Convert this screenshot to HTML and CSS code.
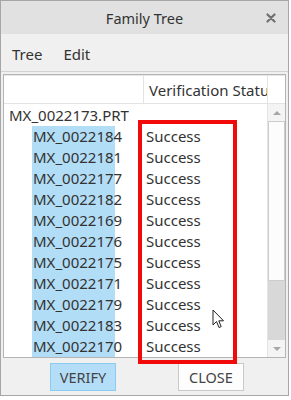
FILE: index.html
```html
<!DOCTYPE html>
<html lang="en">
<head>
<meta charset="UTF-8" />
<meta name="viewport" content="width=device-width, initial-scale=1" />
<title>Family Tree</title>
<link rel="stylesheet" href="styles.css">
</head>
<body>

<div class="window">
  <div class="titlebar">
    <span></span>
    <span class="title">Family Tree</span>
    <svg class="close" width="10" height="10" viewBox="0 0 10 10">
      <path d="M1.5 1.5 L8.5 8.5 M8.5 1.5 L1.5 8.5" stroke="#6f6f6f" stroke-width="2.2" stroke-linecap="round"/>
    </svg>
  </div>

  <div class="menubar">
    <span class="menu-item">Tree</span>
    <span class="menu-item">Edit</span>
  </div>

  <div class="panel">
    <div class="list">
      <div class="list-header">
        <div class="col-name"></div>
        <div class="col-status">Verification Status</div>
      </div>
      <div class="list-body" id="listBody">
        <div class="row">
          <div class="col-name root">MX_0022173.PRT</div>
          <div class="col-status"></div>
        </div>
        <!-- child rows injected by JS -->
      </div>
    </div>
    <div class="scrollbar">
      <div class="scroll-corner"></div>
      <div class="scroll-btn"><span class="arrow up"></span></div>
      <div class="scroll-thumb"></div>
      <div class="scroll-track"></div>
      <div class="scroll-btn"><span class="arrow down"></span></div>
    </div>
  </div>

  <div class="buttons">
    <button class="btn primary">VERIFY</button>
    <button class="btn">CLOSE</button>
  </div>

  <!-- annotation overlay -->
  <div class="highlight-box"></div>
  <svg class="cursor" width="13" height="21" viewBox="0 0 13 21">
    <path d="M1 1 L1 16 L4.5 12.5 L7 18.5 L9.2 17.6 L6.8 11.8 L11.5 11.8 Z" fill="#fff" stroke="#222" stroke-width="1" stroke-linejoin="round"/>
  </svg>
</div>

<script>
  const parts = ['0022184', '0022181', '0022177', '0022182', '0022169', '0022176',
                 '0022175', '0022171', '0022179', '0022183', '0022170'];
  const listBody = document.getElementById('listBody');

  parts.forEach(p => {
    const row = document.createElement('div');
    row.className = 'row';
    row.innerHTML = `
      <div class="col-name child"><span class="sel">MX_${p}</span></div>
      <div class="col-status">Success</div>
    `;
    listBody.appendChild(row);
  });
</script>

</body>
</html>
```

FILE: styles.css
```css
/* Reset */
*, *::before, *::after {
  box-sizing: border-box;
}

body {
  margin: 0;
  background: #fff;
  font-family: 'Noto Sans', 'Open Sans', sans-serif;
  color: #333;
}

/* Dialog frame */
.window {
  position: relative;
  width: 289px;
  height: 396px;
  border: 1px solid #a6a6a6;
  background: #f0f0f0;
  display: flex;
  flex-direction: column;
}

.titlebar {
  height: 33px;
  background: #e1e1e1;
  display: grid;
  grid-template-columns: 1fr auto 1fr;
  align-items: center;
  font-size: 14.5px;
  color: #333;
}

.titlebar .close {
  justify-self: end;
  margin-right: 12px;
}

/* Menu */
.menubar {
  height: 38px;
  display: flex;
  align-items: center;
  gap: 21px;
  padding: 2px 0 0 11px;
  font-size: 15px;
  color: #333;
  border-bottom: 1px solid #d2d2d2;
}

/* List panel */
.panel {
  margin: 2px 2px 0 2px;
  height: 284px;
  border: 1px solid #b4b4b4;
  background: #fff;
  display: flex;
}

.list {
  flex: 1;
  display: flex;
  flex-direction: column;
  min-width: 0;
}

.list-header {
  height: 29px;
  display: flex;
  border-top: 1px solid #e6e6e6;
  border-bottom: 1px solid #e3e3e3;
  font-size: 15px;
}

.list-header .col-name {
  border-right: 1px solid #e3e3e3;
}

.list-header .col-status {
  padding-left: 5px;
  display: flex;
  align-items: center;
  white-space: nowrap;
  overflow: hidden;
  flex: 1;
}

.list-body {
  padding-top: 1px;
}

.row {
  height: 21px;
  display: flex;
  font-size: 15px;
  line-height: 21px;
}

.col-name {
  width: 140px;
  flex-shrink: 0;
}

.col-name.root {
  padding-left: 5px;
}

.col-name.child {
  padding-left: 28px;
}

.sel {
  display: block;
  width: 83px;
  padding-left: 1px;
  background: #b2ddf7;
}

.row .col-status {
  padding-left: 2px;
}

/* Scrollbar */
.scrollbar {
  width: 18px;
  display: flex;
  flex-direction: column;
  border-left: 1px solid #e3e3e3;
}

.scroll-corner {
  height: 29px;
  border-top: 1px solid #e6e6e6;
  border-bottom: 1px solid #e3e3e3;
}

.scroll-btn {
  height: 17px;
  display: flex;
  align-items: center;
  justify-content: center;
  background: #f4f4f4;
}

.arrow {
  width: 0;
  height: 0;
  border-left: 4px solid transparent;
  border-right: 4px solid transparent;
}

.arrow.up {
  border-bottom: 4px solid #a6a6a6;
}

.arrow.down {
  border-top: 4px solid #a6a6a6;
}

.scroll-thumb {
  height: 160px;
  background: #fcfcfc;
  border: 1px solid #cdcdcd;
}

.scroll-track {
  flex: 1;
  background: #d8d8d8;
}

/* Bottom buttons */
.buttons {
  display: flex;
  padding: 5px 0 0 49px;
  gap: 62px;
}

.btn {
  height: 28px;
  padding: 0;
  width: 66px;
  font-family: inherit;
  font-size: 14.5px;
  color: #444;
  background: #fdfdfd;
  border: 1px solid #c8c8c8;
}

.btn.primary {
  background: #b4def8;
  border-color: #8ccbf0;
}

/* Annotation overlay */
.highlight-box {
  position: absolute;
  left: 137px;
  top: 119px;
  width: 99px;
  height: 244px;
  border: 4px solid #f00a0a;
}

.cursor {
  position: absolute;
  left: 211px;
  top: 308px;
}
```
